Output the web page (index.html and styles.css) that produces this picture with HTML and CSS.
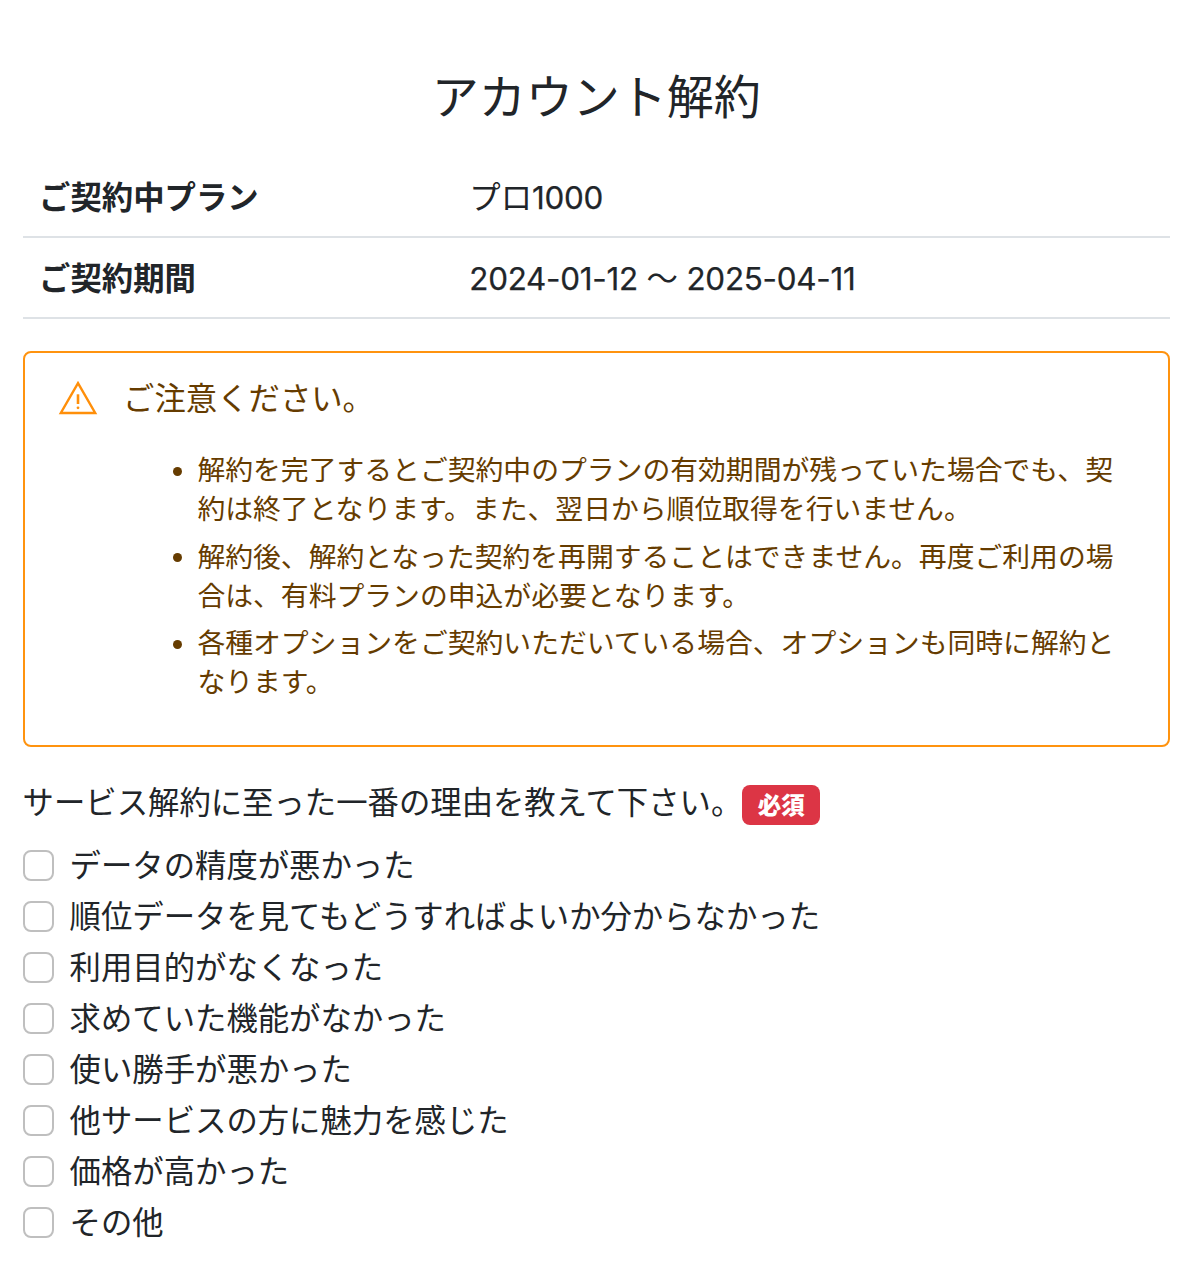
FILE: index.html
```html
<!DOCTYPE html>
<html lang="ja">
<head>
<meta charset="utf-8">
<title>アカウント解約</title>
<link rel="stylesheet" href="styles.css">
</head>
<body>
<main class="page">
  <h1 class="title">アカウント解約</h1>
  <dl class="plan">
    <div class="plan-row"><dt>ご契約中プラン</dt><dd>プロ<span class="num">1000</span></dd></div>
    <div class="plan-row"><dt>ご契約期間</dt><dd class="period"><span class="num">2024-01-12</span> 〜 <span class="num">2025-04-11</span></dd></div>
  </dl>
  <section class="alert">
    <div class="alert-head">
      <svg class="alert-icon" viewBox="0 0 40 36" width="40" height="36" aria-hidden="true">
        <path d="M20 3.2 L37.2 33 H2.8 Z" fill="none" stroke="#ff8f0a" stroke-width="2.4"/>
        <path d="M20 14.3 V24" stroke="#ff8f0a" stroke-width="2.6"/>
        <circle cx="20" cy="27.8" r="1.4" fill="#ff8f0a"/>
      </svg>
      <h2 class="alert-title">ご注意ください。</h2>
    </div>
    <ul class="alert-list">
      <li>解約を完了するとご契約中のプランの有効期間が残っていた場合でも、契約は終了となります。また、翌日から順位取得を行いません。</li>
      <li>解約後、解約となった契約を再開することはできません。再度ご利用の場合は、有料プランの申込が必要となります。</li>
      <li>各種オプションをご契約いただいている場合、オプションも同時に解約となります。</li>
    </ul>
  </section>
  <form>
    <div class="question"><span class="question-text">サービス解約に至った一番の理由を教えて下さい。</span><span class="badge">必須</span></div>
    <div class="options">
      <label class="option"><input type="checkbox"><span>データの精度が悪かった</span></label>
      <label class="option"><input type="checkbox"><span>順位データを見てもどうすればよいか分からなかった</span></label>
      <label class="option"><input type="checkbox"><span>利用目的がなくなった</span></label>
      <label class="option"><input type="checkbox"><span>求めていた機能がなかった</span></label>
      <label class="option"><input type="checkbox"><span>使い勝手が悪かった</span></label>
      <label class="option"><input type="checkbox"><span>他サービスの方に魅力を感じた</span></label>
      <label class="option"><input type="checkbox"><span>価格が高かった</span></label>
      <label class="option"><input type="checkbox"><span>その他</span></label>
    </div>
  </form>
</main>
</body>
</html>
```
FILE: styles.css
```css
* { box-sizing: border-box; }
body {
  margin: 0;
  background: #fff;
  color: #212529;
  font-family: "Noto Sans CJK JP", sans-serif;
  font-size: 31.36px;
  line-height: 47px;
}
.page { padding: 66px 30px 0 22.6px; }
.title {
  margin: 0;
  font-size: 47.04px;
  font-weight: 400;
  line-height: 56px;
  text-align: center;
}
.plan { margin: 35px 0 0; }
.plan-row {
  display: grid;
  grid-template-columns: 430.2px 1fr;
  height: 81px;
  padding: 15px 0 0 16.5px;
  border-bottom: 2px solid #dee2e6;
}
.plan-row dt { font-weight: 700; }
.plan-row dd { margin: 0; }
.num {
  font-family: Inter, sans-serif;
  letter-spacing: -0.25px;
  -webkit-text-stroke: 0.25px currentColor;
}
.period { word-spacing: 1.6px; }
.alert {
  height: 396px;
  margin-top: 32px;
  padding: 20px 40px 0 32px;
  border: 2px solid #ff930f;
  border-radius: 8px;
  color: #663c00;
}
.alert-head { display: flex; gap: 25.5px; align-items: center; }
.alert-icon { flex: none; margin: 2px 0 0 1px; }
.alert-title { margin: 0; font-size: 31.36px; font-weight: 400; line-height: 47px; }
.alert-list {
  margin: 29px 0 0;
  padding: 0 0 0 116.8px;
  font-size: 27.82px;
  line-height: 39.3px;
  list-style: none;
}
.alert-list li {
  display: grid;
  grid-template-columns: 10px 1fr;
  column-gap: 14px;
  margin-bottom: 8px;
}
.alert-list li::before {
  content: "";
  width: 9px;
  height: 9px;
  margin-top: 17.5px;
  border-radius: 50%;
  background: currentColor;
}
.question { display: flex; align-items: center; margin-top: 32px; height: 51px; }
.question-text { padding-bottom: 8px; }
.badge {
  height: 40px;
  margin-left: 0;
  padding: 0 15.5px;
  border-radius: 8px;
  background: #dc3545;
  color: #fff;
  font-size: 23.5px;
  font-weight: 900;
  line-height: 39px;
}
.options { margin-top: 10px; }
.option { display: flex; align-items: center; gap: 16px; height: 51.05px; }
.option span { padding-bottom: 5px; }
.option input {
  appearance: none;
  flex: none;
  width: 31px;
  height: 31px;
  margin: 0;
  border: 2px solid #bfbfbf;
  border-radius: 8px;
  background: #fff;
}
```
